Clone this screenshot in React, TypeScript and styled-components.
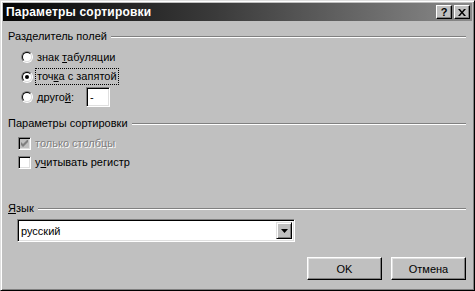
import React from "react";
import styled, { createGlobalStyle } from "styled-components";

const Global = createGlobalStyle`
  html, body { margin: 0; padding: 0; background: #c0c0c0; }
  body { font-family: "Liberation Sans", Arial, sans-serif; font-size: 11px; color: #000; }
`;

const Window = styled.div`
  width: 475px;
  height: 291px;
  box-sizing: border-box;
  background: #c0c0c0;
  border-top: 1px solid #dfdfdf;
  border-left: 1px solid #dfdfdf;
  border-right: 1px solid #000;
  border-bottom: 1px solid #000;
  box-shadow: inset 1px 1px #fff, inset -1px -1px #808080;
  padding: 2px;
  display: flex;
  flex-direction: column;
`;

const TitleBar = styled.div`
  height: 18px;
  flex: none;
  background: linear-gradient(to right, #050505 0%, #3a3a3a 45%, #8a8a8a 100%);
  display: flex;
  align-items: center;
  padding: 0 2px 0 2px;
`;

const Title = styled.div`
  flex: 1;
  color: #fff;
  font-weight: bold;
  font-size: 12px;
  letter-spacing: 0.2px;
  padding-left: 1px;
`;

const TitleButton = styled.div<{ $gap?: number }>`
  width: 16px;
  height: 14px;
  box-sizing: border-box;
  background: #c0c0c0;
  border-top: 1px solid #fff;
  border-left: 1px solid #fff;
  border-right: 1px solid #000;
  border-bottom: 1px solid #000;
  box-shadow: inset -1px -1px #808080;
  margin-left: ${(p) => p.$gap ?? 0}px;
  display: flex;
  align-items: center;
  justify-content: center;
  font-weight: bold;
  font-size: 11px;
  line-height: 1;
  color: #000;
`;

const Body = styled.div`
  flex: 1;
  padding: 0 5px 0 5px;
  display: flex;
  flex-direction: column;
`;

const GroupHeader = styled.div<{ $mt: number }>`
  display: flex;
  align-items: center;
  height: 14px;
  margin-top: ${(p) => p.$mt}px;
  margin-right: 1px;
`;

const GroupLine = styled.div`
  flex: 1;
  height: 1px;
  background: #808080;
  border-bottom: 1px solid #fff;
  margin-left: 4px;
  margin-top: 1px;
`;

const Row = styled.div<{ $mt: number; $ml: number; $h?: number }>`
  display: flex;
  align-items: center;
  height: ${(p) => p.$h ?? 14}px;
  margin-top: ${(p) => p.$mt}px;
  margin-left: ${(p) => p.$ml}px;
`;

const RadioOuter = styled.span`
  width: 12px;
  height: 12px;
  box-sizing: border-box;
  border-radius: 50%;
  border: 1px solid;
  border-color: #808080 #fff #fff #808080;
  flex: none;
  display: flex;
`;

const RadioInner = styled.span`
  flex: 1;
  border-radius: 50%;
  border: 1px solid;
  border-color: #000 #dfdfdf #dfdfdf #000;
  background: #fff;
  display: flex;
  align-items: center;
  justify-content: center;
`;

const RadioDot = styled.span`
  width: 4px;
  height: 4px;
  border-radius: 50%;
  background: #000;
`;

const Label = styled.span<{ $focus?: boolean; $disabled?: boolean }>`
  margin-left: 2px;
  padding: 1px 1px 2px 1px;
  border: 1px dotted ${(p) => (p.$focus ? "#000" : "transparent")};
  color: ${(p) => (p.$disabled ? "#808080" : "#000")};
  text-shadow: ${(p) => (p.$disabled ? "1px 1px 0 #fff" : "none")};
  white-space: nowrap;
  line-height: 12px;
`;

const U = styled.span`
  text-decoration: underline;
`;

const SmallInput = styled.div`
  width: 24px;
  height: 20px;
  box-sizing: border-box;
  margin-left: 10px;
  background: #fff;
  border-top: 1px solid #808080;
  border-left: 1px solid #808080;
  border-right: 1px solid #fff;
  border-bottom: 1px solid #fff;
  box-shadow: inset 1px 1px #000, inset -1px -1px #dfdfdf;
  padding: 2px 3px;
  line-height: 14px;
`;

const CheckBox = styled.span<{ $disabled?: boolean }>`
  width: 13px;
  height: 13px;
  box-sizing: border-box;
  flex: none;
  background: ${(p) => (p.$disabled ? "#c0c0c0" : "#fff")};
  border-top: 1px solid #808080;
  border-left: 1px solid #808080;
  border-right: 1px solid #fff;
  border-bottom: 1px solid #fff;
  box-shadow: inset 1px 1px #000, inset -1px -1px #dfdfdf;
  display: flex;
  align-items: center;
  justify-content: center;
`;

const Combo = styled.div`
  margin-top: 4px;
  margin-left: 9px;
  width: 278px;
  height: 23px;
  box-sizing: border-box;
  background: #fff;
  border-top: 1px solid #808080;
  border-left: 1px solid #808080;
  border-right: 1px solid #fff;
  border-bottom: 1px solid #fff;
  box-shadow: inset 1px 1px #000, inset -1px -1px #dfdfdf;
  padding: 2px;
  display: flex;
  align-items: center;
`;

const ComboText = styled.div`
  flex: 1;
  padding-left: 1px;
`;

const ComboButton = styled.div`
  width: 16px;
  height: 17px;
  box-sizing: border-box;
  background: #c0c0c0;
  border-top: 1px solid #dfdfdf;
  border-left: 1px solid #dfdfdf;
  border-right: 1px solid #000;
  border-bottom: 1px solid #000;
  box-shadow: inset 1px 1px #fff, inset -1px -1px #808080;
  display: flex;
  align-items: center;
  justify-content: center;
`;

const Footer = styled.div`
  margin-top: auto;
  margin-bottom: 8px;
  display: flex;
  justify-content: flex-end;
  gap: 9px;
  margin-right: 1px;
`;

const Button = styled.div`
  width: 75px;
  height: 23px;
  box-sizing: border-box;
  background: #c0c0c0;
  border-top: 1px solid #fff;
  border-left: 1px solid #fff;
  border-right: 1px solid #000;
  border-bottom: 1px solid #000;
  box-shadow: inset -1px -1px #808080, inset 1px 1px #dfdfdf;
  display: flex;
  align-items: center;
  justify-content: center;
`;

function Radio({ checked }: { checked?: boolean }) {
  return (
    <RadioOuter>
      <RadioInner>{checked && <RadioDot />}</RadioInner>
    </RadioOuter>
  );
}

export default function App() {
  return (
    <>
      <Global />
      <Window>
        <TitleBar>
          <Title>Параметры сортировки</Title>
          <TitleButton>?</TitleButton>
          <TitleButton $gap={2}>
            <svg width="8" height="7" viewBox="0 0 8 7">
              <path d="M0 0h2l2 2.5L6 0h2L5 3.5 8 7H6L4 4.5 2 7H0l3-3.5z" fill="#000" />
            </svg>
          </TitleButton>
        </TitleBar>
        <Body>
          <GroupHeader $mt={8}>
            <span>Разделитель полей</span>
            <GroupLine />
          </GroupHeader>
          <Row $mt={7} $ml={13}>
            <Radio />
            <Label>
              знак <U>т</U>абуляции
            </Label>
          </Row>
          <Row $mt={4} $ml={13} $h={17}>
            <Radio checked />
            <Label $focus>
              точ<U>к</U>а с запятой
            </Label>
          </Row>
          <Row $mt={2} $ml={13} $h={20}>
            <Radio />
            <Label>
              друго<U>й</U>:
            </Label>
            <SmallInput>-</SmallInput>
          </Row>
          <GroupHeader $mt={9}>
            <span>Параметры сортировки</span>
            <GroupLine />
          </GroupHeader>
          <Row $mt={6} $ml={10}>
            <CheckBox $disabled>
              <svg width="7" height="7" viewBox="0 0 7 7">
                <path d="M0 2v3l2 2 5-5V-1L2 4z" fill="#808080" />
              </svg>
            </CheckBox>
            <Label $disabled>только столбцы</Label>
          </Row>
          <Row $mt={5} $ml={10}>
            <CheckBox />
            <Label>
              у<U>ч</U>итывать регистр
            </Label>
          </Row>
          <GroupHeader $mt={32}>
            <span>
              <U>Я</U>зык
            </span>
            <GroupLine />
          </GroupHeader>
          <Combo>
            <ComboText>русский</ComboText>
            <ComboButton>
              <svg width="7" height="4" viewBox="0 0 7 4">
                <path d="M0 0h7L3.5 4z" fill="#000" />
              </svg>
            </ComboButton>
          </Combo>
          <Footer>
            <Button>OK</Button>
            <Button>Отмена</Button>
          </Footer>
        </Body>
      </Window>
    </>
  );
}
